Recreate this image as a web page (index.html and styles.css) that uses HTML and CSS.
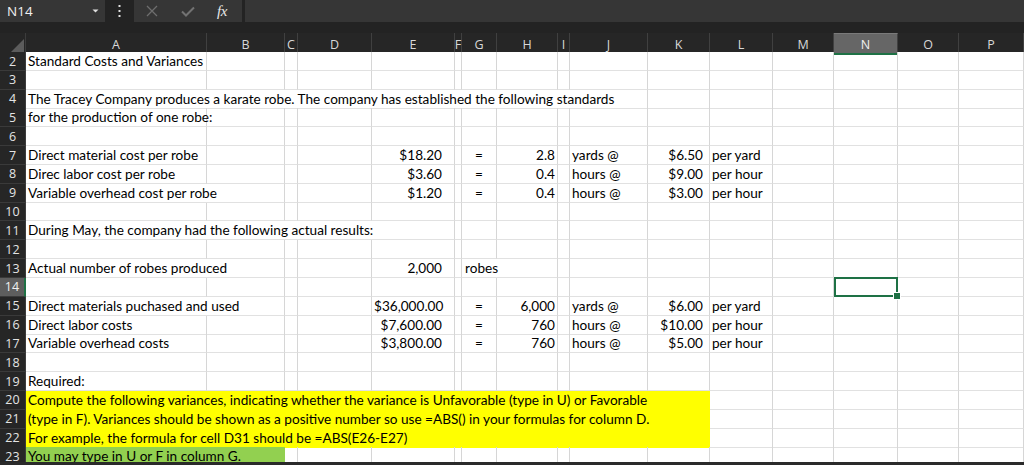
FILE: index.html
```html
<!DOCTYPE html>
<html>
<head>
<meta charset="utf-8">
<link rel="stylesheet" href="styles.css">
</head>
<body>
<div class="fbar">
  <div class="namebox"><span>N14</span><svg width="7" height="4" viewBox="0 0 7 4"><path d="M0.5 0.5h6L3.5 3.5z" fill="#e0e0e0"/></svg></div>
  <div class="dots"><svg width="3" height="13" viewBox="0 0 3 13"><rect x="0.5" y="0" width="2" height="2" fill="#e0e0e0"/><rect x="0.5" y="5" width="2" height="2" fill="#e0e0e0"/><rect x="0.5" y="10" width="2" height="2" fill="#e0e0e0"/></svg></div>
  <div class="fbtns">
    <svg class="ix" width="12" height="12" viewBox="0 0 12 12"><path d="M1 1L11 11M11 1L1 11" stroke="#6e6e6e" stroke-width="1.3" fill="none"/></svg>
    <svg class="ic" width="14" height="11" viewBox="0 0 14 11"><path d="M1 5.5L5 9.5L13 1.5" stroke="#727272" stroke-width="2" fill="none"/></svg>
    <span class="fx">fx</span>
  </div>
  <div class="finput"></div>
</div>
<div class="gap"></div>
<div class="sheet">
  <div class="row hrow">
    <div class="corner"><svg width="17" height="17" viewBox="0 0 17 17"><path d="M17 2V17H2z" fill="#5c5c5c"/></svg></div>
    <div class="h">A</div><div class="h">B</div><div class="h">C</div><div class="h">D</div><div class="h">E</div><div class="h">F</div><div class="h">G</div><div class="h">H</div><div class="h">I</div><div class="h">J</div><div class="h">K</div><div class="h">L</div><div class="h">M</div><div class="h hsel">N</div><div class="h">O</div><div class="h">P</div>
  </div>

  <div class="row"><div class="n">2</div><div class="c">Standard Costs and Variances</div><i></i><i></i><i></i><i></i><i></i><i></i><i></i><i></i><i></i><i></i><i></i><i></i><i></i><i></i><i></i></div>
  <div class="row"><div class="n">3</div><i></i><i></i><i></i><i></i><i></i><i></i><i></i><i></i><i></i><i></i><i></i><i></i><i></i><i></i><i></i><i></i></div>
  <div class="row"><div class="n">4</div><div class="c s10">The Tracey Company produces a karate robe. The company has established the following standards</div><i></i><i></i><i></i><i></i><i></i><i></i></div>
  <div class="row"><div class="n">5</div><div class="c">for the production of one robe:</div><i></i><i></i><i></i><i></i><i></i><i></i><i></i><i></i><i></i><i></i><i></i><i></i><i></i><i></i><i></i></div>
  <div class="row"><div class="n">6</div><i></i><i></i><i></i><i></i><i></i><i></i><i></i><i></i><i></i><i></i><i></i><i></i><i></i><i></i><i></i><i></i></div>
  <div class="row"><div class="n">7</div><div class="c">Direct material cost per robe</div><i></i><i></i><i></i><div class="c r pe">$18.20</div><i></i><div class="c ctr">=</div><div class="c r">2.8</div><i></i><div class="c">yards @</div><div class="c r pk">$6.50</div><div class="c">per yard</div><i></i><i></i><i></i><i></i></div>
  <div class="row"><div class="n">8</div><div class="c">Direc labor cost per robe</div><i></i><i></i><i></i><div class="c r pe">$3.60</div><i></i><div class="c ctr">=</div><div class="c r">0.4</div><i></i><div class="c">hours @</div><div class="c r pk">$9.00</div><div class="c">per hour</div><i></i><i></i><i></i><i></i></div>
  <div class="row"><div class="n">9</div><div class="c s2">Variable overhead cost per robe</div><i></i><i></i><div class="c r pe">$1.20</div><i></i><div class="c ctr">=</div><div class="c r">0.4</div><i></i><div class="c">hours @</div><div class="c r pk">$3.00</div><div class="c">per hour</div><i></i><i></i><i></i><i></i></div>
  <div class="row"><div class="n">10</div><i></i><i></i><i></i><i></i><i></i><i></i><i></i><i></i><i></i><i></i><i></i><i></i><i></i><i></i><i></i><i></i></div>
  <div class="row"><div class="n">11</div><div class="c s5">During May, the company had the following actual results:</div><i></i><i></i><i></i><i></i><i></i><i></i><i></i><i></i><i></i><i></i><i></i></div>
  <div class="row"><div class="n">12</div><i></i><i></i><i></i><i></i><i></i><i></i><i></i><i></i><i></i><i></i><i></i><i></i><i></i><i></i><i></i><i></i></div>
  <div class="row"><div class="n">13</div><div class="c s2">Actual number of robes produced</div><i></i><i></i><div class="c r pe">2,000</div><i></i><div class="c s2 pg">robes</div><i></i><i></i><i></i><i></i><i></i><i></i><i></i><i></i></div>
  <div class="row"><div class="n nsel">14</div><i></i><i></i><i></i><i></i><i></i><i></i><i></i><i></i><i></i><i></i><i></i><i></i><i></i><i class="sel"></i><i></i><i></i></div>
  <div class="row"><div class="n">15</div><div class="c s2">Direct materials puchased and used</div><i></i><i></i><div class="c r pe">$36,000.00</div><i></i><div class="c ctr">=</div><div class="c r">6,000</div><i></i><div class="c">yards @</div><div class="c r pk">$6.00</div><div class="c">per yard</div><i></i><i></i><i></i><i></i></div>
  <div class="row"><div class="n">16</div><div class="c">Direct labor costs</div><i></i><i></i><i></i><div class="c r pe">$7,600.00</div><i></i><div class="c ctr">=</div><div class="c r">760</div><i></i><div class="c">hours @</div><div class="c r pk">$10.00</div><div class="c">per hour</div><i></i><i></i><i></i><i></i></div>
  <div class="row"><div class="n">17</div><div class="c">Variable overhead costs</div><i></i><i></i><i></i><div class="c r pe">$3,800.00</div><i></i><div class="c ctr">=</div><div class="c r">760</div><i></i><div class="c">hours @</div><div class="c r pk">$5.00</div><div class="c">per hour</div><i></i><i></i><i></i><i></i></div>
  <div class="row"><div class="n">18</div><i></i><i></i><i></i><i></i><i></i><i></i><i></i><i></i><i></i><i></i><i></i><i></i><i></i><i></i><i></i><i></i></div>
  <div class="row"><div class="n">19</div><div class="c">Required:</div><i></i><i></i><i></i><i></i><i></i><i></i><i></i><i></i><i></i><i></i><i></i><i></i><i></i><i></i><i></i></div>
  <div class="row"><div class="n">20</div><div class="c s11 yel">Compute the following variances, indicating whether the variance is Unfavorable (type in U) or Favorable</div><i></i><i></i><i></i><i></i><i></i></div>
  <div class="row"><div class="n">21</div><div class="c s11 yel">(type in F). Variances should be shown as a positive number so use =ABS() in your formulas for column D.</div><i></i><i></i><i></i><i></i><i></i></div>
  <div class="row"><div class="n">22</div><div class="c s11 yel">For example, the formula for cell D31 should be =ABS(E26-E27)</div><i></i><i></i><i></i><i></i><i></i></div>
  <div class="row"><div class="n">23</div><div class="c s2 grn">You may type in U or F in column G.</div><i></i><i></i><i></i><i></i><i></i><i></i><i></i><i></i><i></i><i></i><i></i><i></i><i></i><i></i></div>
</div>
<div class="bottombar"></div>
</body>
</html>
```

FILE: styles.css
```css
* { box-sizing: border-box; }
html, body { margin: 0; padding: 0; }
body {
  width: 1024px;
  height: 465px;
  overflow: hidden;
  background: #232323;
  font-family: "Lato", "Liberation Sans", sans-serif;
}

/* formula bar */
.fbar { display: flex; height: 22px; }
.namebox {
  width: 105px;
  background: #363636;
  display: flex;
  align-items: center;
  justify-content: space-between;
  padding: 0 6px 0 7px;
  color: #f0f0f0;
  font: 13.5px "Open Sans", "Liberation Sans", sans-serif;
}
.dots { width: 29px; display: flex; align-items: center; justify-content: center; }
.fbtns {
  width: 108px;
  background: #363636;
  display: flex;
  align-items: center;
  padding-left: 12px;
}
.ix { margin-right: 23px; }
.ic { margin-right: 22px; }
.fx {
  font: italic 15px "Liberation Serif", serif;
  color: #e8e8e8;
  letter-spacing: -0.5px;
}
.finput { flex: 1; margin-left: 3px; background: #363636; }
.gap { height: 11px; }

/* sheet */
.sheet { height: 429px; overflow: hidden; background: #fff; }
.row {
  display: grid;
  grid-template-columns: 26px 181px 78px 13px 74px 83px 7px 35px 61px 12px 78px 62px 63px 61px 64px 61px 65px;
  height: 18.83px;
}
.hrow { height: 19px; background: #262626; }
.corner { display: flex; align-items: flex-end; justify-content: flex-end; padding: 0 1px 1px 0; border-right: 1px solid #3c3c3c; }
.h {
  color: #d8d8d8;
  font: 12.5px "Open Sans", "Liberation Sans", sans-serif;
  display: flex;
  align-items: center;
  justify-content: center;
  border-right: 1px solid #404040;
  padding-top: 1px;
}
.hsel { background: #666; border-top: 1px solid #7a7a7a; border-bottom: 2px solid #1e7145; padding-top: 2px; color: #f0f0f0; }

.n {
  background: #262626;
  color: #e4e4e4;
  font: 12.5px "Open Sans", "Liberation Sans", sans-serif;
  display: flex;
  align-items: center;
  justify-content: center;
  border-bottom: 1px solid #3a3a3a;
  border-right: 1px solid #3c3c3c;
}
.nsel { background: #5e5e5e; border-right: 2px solid #1e7145; color: #f0f0f0; }

.row > i, .c {
  display: block;
  border-right: 1px solid #d6d6d6;
  border-bottom: 1px solid #e1e1e1;
}
.c {
  font-size: 13.6px;
  line-height: 18px;
  color: #000;
  padding: 0 2px;
  white-space: nowrap;
  overflow: visible;
}
.r { text-align: right; }
.ctr { text-align: center; }
.pe { padding-right: 12px; }
.pk { padding-right: 6px; }
.pg { padding-left: 3px; }
.s2 { grid-column: span 2; }
.s5 { grid-column: span 5; }
.s10 { grid-column: span 10; }
.s11 { grid-column: span 11; }
.yel { background: #ffff00; border-color: #ffff00; }
.grn { background: #92d050; border-color: #92d050; }

.sel { position: relative; }
.sel::after {
  content: "";
  position: absolute;
  left: 0;
  top: -1px;
  right: -1px;
  bottom: -1px;
  border: 2px solid #1e7145;
}
.sel::before {
  content: "";
  position: absolute;
  right: -4px;
  bottom: -4px;
  width: 6px;
  height: 6px;
  background: #1e7145;
  border: 1px solid #fff;
  z-index: 2;
}

.bottombar { height: 3px; background: #2a2a2a; }
```
